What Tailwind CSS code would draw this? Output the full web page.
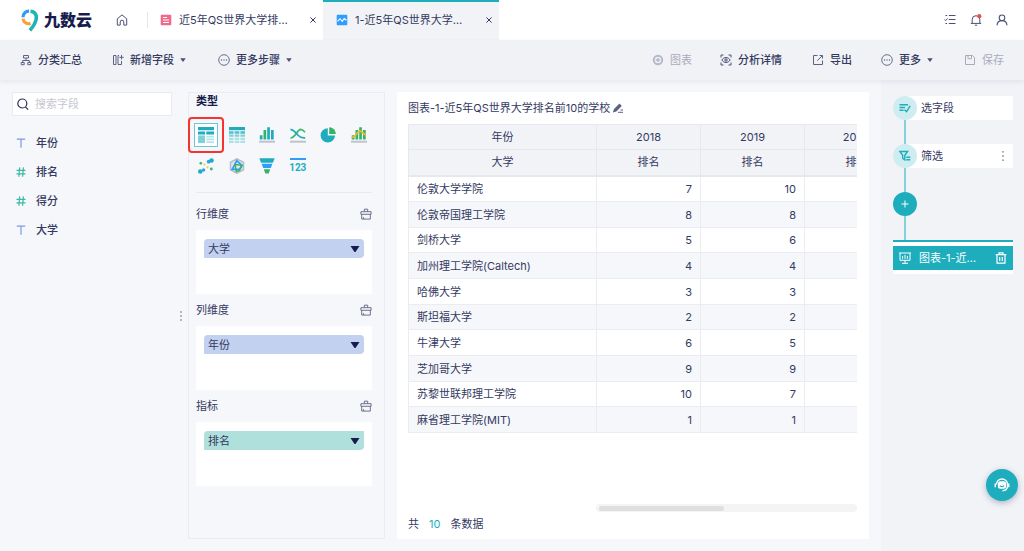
<!DOCTYPE html>
<html lang="zh-CN">
<head>
<meta charset="utf-8">
<meta name="viewport" content="width=device-width, initial-scale=1">
<title>九数云</title>
<script src="https://cdn.jsdelivr.net/npm/@tailwindcss/browser@4"></script>
</head>
<body class="relative flex h-screen flex-col overflow-hidden bg-[#f6f7fa] font-['Inter','Noto_Sans_CJK_SC',sans-serif] text-[11px] leading-4 text-[#343a62]">
<svg class="hidden">
  <symbol id="caret" viewBox="0 0 8 6"><path d="M.3.5h7.4L4 5.7z" fill="currentColor"/></symbol>
  <symbol id="more" viewBox="0 0 12 12"><circle cx="6" cy="6" r="5.3" fill="none" stroke="currentColor" stroke-width=".9"/><g fill="currentColor"><circle cx="3.5" cy="6" r=".7"/><circle cx="6" cy="6" r=".7"/><circle cx="8.5" cy="6" r=".7"/></g></symbol>
  <symbol id="close" viewBox="0 0 8 8"><path d="M1.4 1.4l5.2 5.2M6.6 1.4L1.4 6.6" stroke="currentColor" stroke-width="1"/></symbol>
  <symbol id="clean" viewBox="0 0 12 12"><path d="M4.3 3.6V1.2h3.4v2.4M.9 3.7h10.2v2.6H.9zM1.7 6.3v4.8h8.6V6.3M3.6 11V9.2" fill="none" stroke="currentColor" stroke-width=".9"/></symbol>
  <symbol id="text-type" viewBox="0 0 10 10"><path d="M.8 1.2h8.4M5 1.2v8.5" stroke="#7c9ae0" stroke-width="1.2"/></symbol>
  <symbol id="num-type" viewBox="0 0 10 10"><path d="M.5 3.3h9M.5 6.9h9M3.7.4l-.8 9.4M7.4.4l-.8 9.4" stroke="#3bb8a4" stroke-width="1.2"/></symbol>
</svg>

<header class="flex h-10 shrink-0 items-center bg-white">
  <a href="#" class="ml-5 flex items-center text-base font-black text-[#171c4d]">
    <svg class="mr-1 h-6 w-5" viewBox="0 0 20 24" fill="none" stroke-width="3.2">
      <path d="M3 9.300A6 6 0 0 1 9 3.200" stroke="#2b9df4"/>
      <path d="M3 10.700c.3 3.800 4 6 7.600 4.600" stroke="#f9a33c"/>
      <path d="M10.500 3.200c4.600.4 6.400 4 5.700 7.800-.8 4.400-3 7.600-6.300 11.400" stroke="#1fb3b8" stroke-width="3.600"/>
    </svg>九数云</a>
  <a href="#" aria-label="首页" class="ml-6 text-[#4b5074]"><svg class="size-3" viewBox="0 0 12 12" fill="none" stroke="currentColor" stroke-width="1"><path d="M1.3 4.8L6 .9l4.700 3.900v6.300H7.800V8a1.800 1.800 0 0 0-3.600 0v3.100H1.300z" stroke-linejoin="round"/></svg></a>
  <div class="ml-[19px] h-4 w-px bg-[#e6e7ee]"></div>
  <div class="flex h-10 w-[175px] items-center pr-1.5 pl-3">
    <svg class="mr-[7px] size-3" viewBox="0 0 12 12"><rect x=".7" y=".7" width="10.6" height="10.6" rx="1" fill="#f06a8c"/><path d="M3 3.5h4M3 6h6M3 8.5h6" stroke="#fff"/></svg>
    <a href="#" class="whitespace-nowrap">近5年QS世界大学排…</a>
    <button aria-label="关闭" class="ml-auto"><svg class="size-2"><use href="#close"/></svg></button>
  </div>
  <div class="flex h-10 w-44 items-center border-t-2 border-[#1eadbd] bg-[#f2f3f7] pr-1.5 pb-0.5 pl-[13px]">
    <svg class="mr-[7px] size-3" viewBox="0 0 12 12"><rect x=".7" y=".7" width="10.6" height="10.6" rx="1" fill="#2f9dfb"/><path d="M1.500 7.300L4 4.700l2.300 2.700 1.900-2.900 2.300 1.700" fill="none" stroke="#fff" stroke-width="1.1"/></svg>
    <a href="#" class="whitespace-nowrap">1-近5年QS世界大学…</a>
    <button aria-label="关闭" class="ml-auto"><svg class="size-2"><use href="#close"/></svg></button>
  </div>
  <div class="mr-4 ml-auto flex gap-3.5 text-[#4b5074]">
    <button aria-label="任务"><svg class="size-3" viewBox="0 0 12 12" fill="none" stroke="currentColor"><path d="M4.800 1.500h6.700M4.800 5.500h6.700M4.800 9.500h6.700M1.500 1.500h1.600M1.500 9.500h1.600" stroke-width="1.200"/><path d="M.5 5.500l1.200 1.100 1.900-2.200"/></svg></button>
    <button aria-label="通知"><svg class="size-3" viewBox="0 0 12 12" fill="none" stroke="currentColor"><path d="M.8 9.400h10.400M2.200 9.200V5.500a3.800 3.800 0 0 1 7.600 0v3.700M4.800 11.200h2.400"/><circle cx="9.300" cy="2.200" r="2.100" fill="#f04b4b" stroke="none"/></svg></button>
    <button aria-label="用户"><svg class="size-3" viewBox="0 0 12 12" fill="none" stroke="currentColor" stroke-width="1.100"><circle cx="6" cy="3.800" r="2.800"/><path d="M1 11.400c.2-3 2.200-4.800 5-4.800s4.800 1.800 5 4.800"/></svg></button>
  </div>
</header>

<nav class="z-10 flex h-10 shrink-0 items-center justify-between bg-[#f1f2f6] px-5 font-medium shadow-[0_2px_5px_rgba(40,45,90,0.08)]">
  <div class="flex items-center">
    <button class="flex items-center gap-1.5"><svg class="size-3 text-[#5d6283]" viewBox="0 0 12 12" fill="none" stroke="currentColor"><path d="M3.500 1.500h5v2.500h-5zM1.200 8.500h3v2.200h-3zM7.800 8.500h3v2.200h-3zM6 4v2.500M2.700 8.500v-2h6.600v2"/></svg>分类汇总</button>
    <button class="ml-[30px] flex items-center gap-1.5"><svg class="size-3 text-[#5d6283]" viewBox="0 0 12 12" fill="none" stroke="currentColor"><path d="M1.500 1.500H4v9H1.500zM9.500 7v3.500H6v-9h1M9.500 1v4.500M7.300 3.300h4.400"/></svg>新增字段<svg class="size-1.5 text-[#4b5074]"><use href="#caret"/></svg></button>
    <button class="ml-8 flex items-center gap-1.5"><svg class="size-3 text-[#5d6283]"><use href="#more"/></svg>更多步骤<svg class="size-1.5 text-[#4b5074]"><use href="#caret"/></svg></button>
  </div>
  <div class="flex items-center">
    <button disabled class="flex items-center gap-1.5 font-normal text-[#a9abbd]"><svg class="size-3" viewBox="0 0 12 12"><circle cx="6" cy="6" r="4.200" fill="none" stroke="#b7b9c9" stroke-width="2"/><path d="M6 3.800v4.400M3.800 6h4.400" stroke="#b7b9c9" stroke-width="1.400"/></svg>图表</button>
    <button class="ml-7 flex items-center gap-1.5"><svg class="size-3 text-[#4b5074]" viewBox="0 0 12 12" fill="none" stroke="currentColor"><path d="M1 3.500V1h2.500M8.500 1H11v2.500M11 8.500V11H8.500M3.500 11H1V8.500"/><path d="M1.800 6c2.200-3.300 6.200-3.300 8.400 0-2.200 3.300-6.200 3.300-8.400 0z"/><circle cx="6" cy="6" r="1.200"/></svg>分析详情</button>
    <button class="ml-[30px] flex items-center gap-1.5"><svg class="size-3 text-[#5d6283]" viewBox="0 0 12 12" fill="none" stroke="currentColor"><path d="M5.500 1.500h-4v9h9v-4M7.500 1.500h3v3M10.400 1.600L5.300 6.700"/></svg>导出</button>
    <button class="ml-[29px] flex items-center gap-1.5"><svg class="size-3 text-[#5d6283]"><use href="#more"/></svg>更多<svg class="size-1.5 text-[#4b5074]"><use href="#caret"/></svg></button>
    <button disabled class="ml-[31px] flex items-center gap-1.5 font-normal text-[#a9abbd]"><svg class="size-3" viewBox="0 0 12 12" fill="none" stroke="currentColor"><path d="M1.500 1.500h7l2 2v7h-9zM4 1.500v3.200h3.500V1.500"/></svg>保存</button>
  </div>
</nav>

<main class="flex min-h-0 flex-1">
  <aside class="relative w-[188px] shrink-0 pt-3 pr-4 pl-3">
    <label class="flex h-6 items-center border border-[#eaebf0] bg-white pl-1">
      <svg class="mr-1.5 size-3 shrink-0 text-[#2b3157]" viewBox="0 0 12 12" fill="none" stroke="currentColor" stroke-width="1.200"><circle cx="5.300" cy="5.500" r="4.500"/><path d="M8.500 8.900l2.600 2.700"/></svg>
      <input type="text" aria-label="搜索字段" placeholder="搜索字段" class="w-full bg-transparent outline-none placeholder:text-[#c6c7d1]">
    </label>
    <ul class="mt-3 font-medium">
      <li class="flex h-[29px] items-center gap-2.5 pl-1"><svg class="size-2.5"><use href="#text-type"/></svg>年份</li>
      <li class="flex h-[29px] items-center gap-2.5 pl-1"><svg class="size-2.5"><use href="#num-type"/></svg>排名</li>
      <li class="flex h-[29px] items-center gap-2.5 pl-1"><svg class="size-2.5"><use href="#num-type"/></svg>得分</li>
      <li class="flex h-[29px] items-center gap-2.5 pl-1"><svg class="size-2.5"><use href="#text-type"/></svg>大学</li>
    </ul>
    <svg class="absolute top-1/2 right-1.5 -mt-1.5 h-3 w-0.5" viewBox="0 0 2 12" fill="#b3b5c3"><path d="M0 1h2v2H0zM0 5h2v2H0zM0 9h2v2H0z"/></svg>
  </aside>

  <section class="my-3 w-[197px] shrink-0 border border-[#ebecf1] pr-3 pl-[7px]">
    <h2 class="text-[11px] font-bold text-[#171c4d]">类型</h2>
    <div class="mt-3.5 -mr-0.5 -ml-[5px] grid grid-cols-6 justify-items-center gap-y-[7px]">
      <button aria-label="分组表" class="relative flex size-6 items-center justify-center border border-[#6cc9d3] bg-white">
        <svg class="size-4" viewBox="0 0 16 16"><path d="M0 0h16v3.200H0zM0 4.500h7v3H0zM8.300 4.500H16v3H8.300z" fill="#1fadbd"/><path d="M0 8.400h7V16H0z" fill="#7fd0d8"/><path d="M8.300 8.800H16v1.800H8.300zM8.300 11.600H16v1.600H8.300zM8.300 14.200H16V16H8.300z" fill="#b5e3e8"/></svg>
        <span class="absolute -inset-[7px] rounded border-2 border-[#f5352d]"></span>
      </button>
      <button aria-label="交叉表" class="flex size-6 items-center justify-center"><svg class="size-4" viewBox="0 0 16 16"><path d="M0 0h16v3.200H0z" fill="#1fadbd"/><path d="M0 4.300h4.600v2.500H0zM5.700 4.300h4.600v2.500H5.700zM11.400 4.300H16v2.500h-4.600z" fill="#4fbfcb"/><path d="M0 7.600h4.600v2.200H0zM5.700 7.600h4.600v2.200H5.700zM11.400 7.600H16v2.200h-4.600z" fill="#83d2da"/><path d="M0 10.700h4.600v2.200H0zM5.700 10.700h4.600v2.200H5.700zM11.400 10.700H16v2.200h-4.600zM0 13.800h4.600V16H0zM5.700 13.800h4.600V16H5.700zM11.400 13.800H16V16h-4.600z" fill="#ade0e5"/></svg></button>
      <button aria-label="柱形图" class="flex size-6 items-center justify-center"><svg class="size-4" viewBox="0 0 16 16"><path d="M.8 8.200h2.700v4.300H.8zM8.200.2h2.700v12.300H8.200z" fill="#1fadbd"/><path d="M4.500 3h2.700v9.500H4.500z" fill="#33b565"/><path d="M12 3h2.700v9.500H12z" fill="#1fadbd"/><path d="M0 13.700h16v2H0z" fill="#bfc1cf"/></svg></button>
      <button aria-label="折线图" class="flex size-6 items-center justify-center"><svg class="size-4" viewBox="0 0 16 16" fill="none" stroke-width="1.700"><path d="M.5 10.800C6 11 6.500 2.600 10.800 2.300c2 0 3 1.600 4.200 3" stroke="#3dba70"/><path d="M.5 2.300c3.700.6 5.300 3.400 7.500 5.900 2 2.200 4.300 3 7.200 2.600" stroke="#1fadbd"/><path d="M0 14.700h16" stroke="#bfc1cf" stroke-width="2"/></svg></button>
      <button aria-label="饼图" class="flex size-6 items-center justify-center"><svg class="size-4" viewBox="0 0 16 16"><path d="M7.800 1.200v7.200H15A7.200 7.200 0 1 1 7.800 1.200z" fill="#1fadbd"/><path d="M9.200.2A6.900 6.900 0 0 1 15.900 7H9.200z" fill="#33b565"/></svg></button>
      <button aria-label="组合图" class="flex size-6 items-center justify-center"><svg class="size-4" viewBox="0 0 16 16"><path d="M.8 8.200h2.700v4.300H.8zM12 3h2.700v9.500H12zM4.500 3h2.700v9.500H4.500zM8.200.2h2.700v12.300H8.200z" fill="#33b565"/><path d="M0 13.700h16v2H0z" fill="#bfc1cf"/><path d="M.5 10.300c4.700.7 4.700-6 8.500-6.200 2.800 0 3 3.500 6.200 3.900" fill="none" stroke="#f9b233" stroke-width="1.700"/></svg></button>
      <button aria-label="散点图" class="flex size-6 items-center justify-center"><svg class="size-4" viewBox="0 0 16 16"><g fill="#2f9dfb"><circle cx="10.700" cy="3.700" r="1.900"/><circle cx="5.600" cy="12" r="1.700"/></g><g fill="#1fadbd"><circle cx="13.500" cy="2.500" r="2.300"/><circle cx="2.300" cy="13.500" r="2.300"/></g><g fill="#33b565"><circle cx="2.800" cy="5.300" r="1.300"/><circle cx="13.300" cy="11" r="1.400"/></g><g fill="#f9c846"><circle cx="6.500" cy="6.500" r="1.100"/><circle cx="9.500" cy="9.300" r="1.100"/></g></svg></button>
      <button aria-label="雷达图" class="flex size-6 items-center justify-center"><svg class="size-4" viewBox="0 0 16 16" fill="none"><path d="M8 .8l6.500 3.500v7.400L8 15.200l-6.500-3.500V4.300z" fill="#e2e4ec" stroke="#b9bccd" stroke-width="1.500"/><path d="M7.800 2.600l5.200 5-2.500 3.600-7.300.2z" stroke="#2f9dfb" stroke-width="1.700"/><path d="M6 6.500l7 .8-2.500 5.200-3.200 1z" stroke="#33b565" stroke-width="1.500"/></svg></button>
      <button aria-label="漏斗图" class="flex size-6 items-center justify-center"><svg class="size-4" viewBox="0 0 16 16"><path d="M.3.300h15.400l-1.800 4.400H2.100z" fill="#1fadbd"/><path d="M2.600 5.800h10.800l-1.600 4.300H4.200z" fill="#2f9dfb"/><path d="M4.800 11.300h6.400L9.700 15.600H6.300z" fill="#33b565"/></svg></button>
      <button aria-label="指标卡" class="flex size-6 flex-col items-center justify-center gap-0.5 font-['Roboto'] text-[10px] leading-3 font-bold text-[#1fadbd]"><span class="h-0.5 w-4 bg-[#2f9dfb]"></span>123</button>
    </div>
    <hr class="mt-3.5 border-[#e9eaef]">

    <div class="mt-[5px] flex h-8 items-center justify-between"><h3>行维度</h3><button aria-label="清空行维度" class="text-[#5d6283]"><svg class="size-3"><use href="#clean"/></svg></button></div>
    <div class="h-16 bg-white px-2 pt-[9px]"><button class="flex h-[19px] w-full items-center justify-between rounded rounded-bl-none bg-[#c2d1ef] px-1">大学<svg class="h-1.5 w-2.5 text-[#171c4d]" viewBox="0 0 10 6"><path d="M.5 0h9L5.500 6h-1z" fill="currentColor"/></svg></button></div>
    <div class="flex h-8 items-center justify-between"><h3>列维度</h3><button aria-label="清空列维度" class="text-[#5d6283]"><svg class="size-3"><use href="#clean"/></svg></button></div>
    <div class="h-16 bg-white px-2 pt-[9px]"><button class="flex h-[19px] w-full items-center justify-between rounded rounded-bl-none bg-[#c2d1ef] px-1">年份<svg class="h-1.5 w-2.5 text-[#171c4d]" viewBox="0 0 10 6"><path d="M.5 0h9L5.500 6h-1z" fill="currentColor"/></svg></button></div>
    <div class="flex h-8 items-center justify-between"><h3>指标</h3><button aria-label="清空指标" class="text-[#5d6283]"><svg class="size-3"><use href="#clean"/></svg></button></div>
    <div class="h-16 bg-white px-2 pt-[9px]"><button class="flex h-[19px] w-full items-center justify-between rounded rounded-tr-none rounded-bl-none bg-[#b0e0dc] px-1">排名<svg class="h-1.5 w-2.5 text-[#171c4d]" viewBox="0 0 10 6"><path d="M.5 0h9L5.500 6h-1z" fill="currentColor"/></svg></button></div>
  </section>

  <section class="m-3 flex min-w-0 flex-1 flex-col bg-white pt-2 pr-3 pb-[7px] pl-[11px]">
    <h1 class="flex items-center gap-0.5 text-[11px] whitespace-nowrap">图表-1-近5年QS世界大学排名前10的学校<button aria-label="重命名"><svg class="size-3 text-[#5d6283]" viewBox="0 0 12 12"><path d="M.8 10.500l1.200-3.400L7.500 1.600l2.300 2.300-5.500 5.500z" fill="currentColor"/><path d="M6 10.300h5M8.500 8h2.500" stroke="currentColor"/></svg></button></h1>
    <div class="mt-2 overflow-hidden">
      <table class="w-[500px] table-fixed border-collapse">
        <colgroup><col class="w-[188px]"><col class="w-[104px]"><col class="w-[104px]"><col class="w-[104px]"></colgroup>
        <thead class="bg-[#f2f3f7] [&_th]:border [&_th]:border-[#e6e8ee] [&_th]:font-normal">
          <tr class="h-[25px]"><th>年份</th><th>2018</th><th>2019</th><th>2020</th></tr>
          <tr class="h-[26px] border-b-2 border-[#e6e8ee]"><th>大学</th><th>排名</th><th>排名</th><th>排名</th></tr>
        </thead>
        <tbody class="[&_td]:border [&_td]:border-[#eaecf1] [&_td]:px-2 [&_td]:text-right [&_td:first-child]:text-left [&_tr]:h-[26px] [&_tr:nth-child(3n)]:h-[25px] [&_tr:nth-child(even)]:bg-[#f6f7fa]">
          <tr><td>伦敦大学学院</td><td>7</td><td>10</td><td></td></tr>
          <tr><td>伦敦帝国理工学院</td><td>8</td><td>8</td><td></td></tr>
          <tr><td>剑桥大学</td><td>5</td><td>6</td><td></td></tr>
          <tr><td>加州理工学院(Caltech)</td><td>4</td><td>4</td><td></td></tr>
          <tr><td>哈佛大学</td><td>3</td><td>3</td><td></td></tr>
          <tr><td>斯坦福大学</td><td>2</td><td>2</td><td></td></tr>
          <tr><td>牛津大学</td><td>6</td><td>5</td><td></td></tr>
          <tr><td>芝加哥大学</td><td>9</td><td>9</td><td></td></tr>
          <tr><td>苏黎世联邦理工学院</td><td>10</td><td>7</td><td></td></tr>
          <tr><td>麻省理工学院(MIT)</td><td>1</td><td>1</td><td></td></tr>
        </tbody>
      </table>
    </div>
    <div class="mt-auto ml-[188px] flex h-2 items-center rounded-full bg-[#f4f4f4] px-[3px]"><div class="h-[5px] w-[49%] rounded-full bg-[#dedfe1]"></div></div>
    <p class="mt-1 flex gap-2.5">共 <span class="text-[#1eadbd]">10</span> 条数据</p>
  </section>

  <aside class="w-[143px] shrink-0 bg-[#f2f3f7] pt-4 pr-[11px] pl-3">
    <div class="flex items-center">
      <span class="z-10 flex size-6 shrink-0 items-center justify-center rounded-full bg-[#cfedf1]"><svg class="size-3" viewBox="0 0 12 12" fill="none" stroke="#1eadbd" stroke-width="1.400"><path d="M.5 2.700h8.500M.5 5.500h5.500M.5 8.300h4M5.500 7.800l2 1.800 3.700-5.800"/></svg></span>
      <button class="-ml-3 flex h-6 flex-1 items-center bg-white pl-4">选字段</button>
    </div>
    <div class="ml-[11px] h-6 w-0.5 bg-[#84d1d9]"></div>
    <div class="flex items-center">
      <span class="z-10 flex size-6 shrink-0 items-center justify-center rounded-full bg-[#cfedf1]"><svg class="size-3" viewBox="0 0 12 12" fill="none" stroke="#1eadbd" stroke-width="1.400"><path d="M.8 1.500h7.800L5.800 5.300v4.700L3.700 8.500V5.300zM7.300 7.300h4M7.300 9.800h4"/></svg></span>
      <div class="-ml-3 flex h-6 flex-1 items-center justify-between bg-white pr-2 pl-4"><span>筛选</span><button aria-label="更多操作"><svg class="h-3 w-1" viewBox="0 0 4 12" fill="#8b8fa8"><circle cx="2" cy="1.800" r=".9"/><circle cx="2" cy="6" r=".9"/><circle cx="2" cy="10.200" r=".9"/></svg></button></div>
    </div>
    <div class="ml-[11px] h-6 w-0.5 bg-[#84d1d9]"></div>
    <button aria-label="添加步骤" class="flex size-6 items-center justify-center rounded-full bg-[#1eadbd]"><svg class="size-2" viewBox="0 0 8 8" stroke="#fff"><path d="M4 .5v7M.5 4h7"/></svg></button>
    <div class="ml-[11px] h-6 w-0.5 bg-[#84d1d9]"></div>
    <div class="border-t-2 border-[#1eadbd] bg-white py-1">
      <div class="flex h-6 items-center bg-[#1eadbd] px-1.5 text-white">
        <svg class="mr-2 size-3" viewBox="0 0 12 12" fill="none" stroke="#fff"><path d="M0 1h12M1 1v7.300h10V1M3.600 6.800V4M6 6.800V2.800M8.400 6.800V4M6 8.500v2.700M3 11.300h6"/></svg>
        <span>图表-1-近…</span>
        <button aria-label="删除" class="ml-auto"><svg class="size-3" viewBox="0 0 12 12" fill="none" stroke="#fff" stroke-width="1.200"><path d="M.7 2.700h10.600M4 2.500V.8h4v1.700M2 2.900v8.300h8V2.900M4.700 5v4M7.300 5v4"/></svg></button>
      </div>
    </div>
  </aside>
</main>

<button aria-label="在线客服" class="absolute right-1.5 bottom-[50px] z-20 flex size-8 items-center justify-center rounded-full bg-[#1eadbd] shadow-[0_2px_6px_rgba(20,40,80,0.3)]">
  <svg class="size-4" viewBox="0 0 16 16" fill="none" stroke="#fff"><path d="M2.500 7.500a5.500 5.500 0 0 1 11 0v1.500c0 3-2 4.700-5 4.800" stroke-width="1.400"/><rect x="3.900" y="4.200" width="8.200" height="7.500" rx="2.500" fill="#fff" stroke="none"/><path d="M5.800 8.700c1 1.200 3.400 1.200 4.400 0" stroke="#1eadbd" stroke-width="1.100"/><path d="M1.300 6.500v3.700M14.700 6.500v3.700" stroke-width="1.500"/></svg>
</button>
</body>
</html>
